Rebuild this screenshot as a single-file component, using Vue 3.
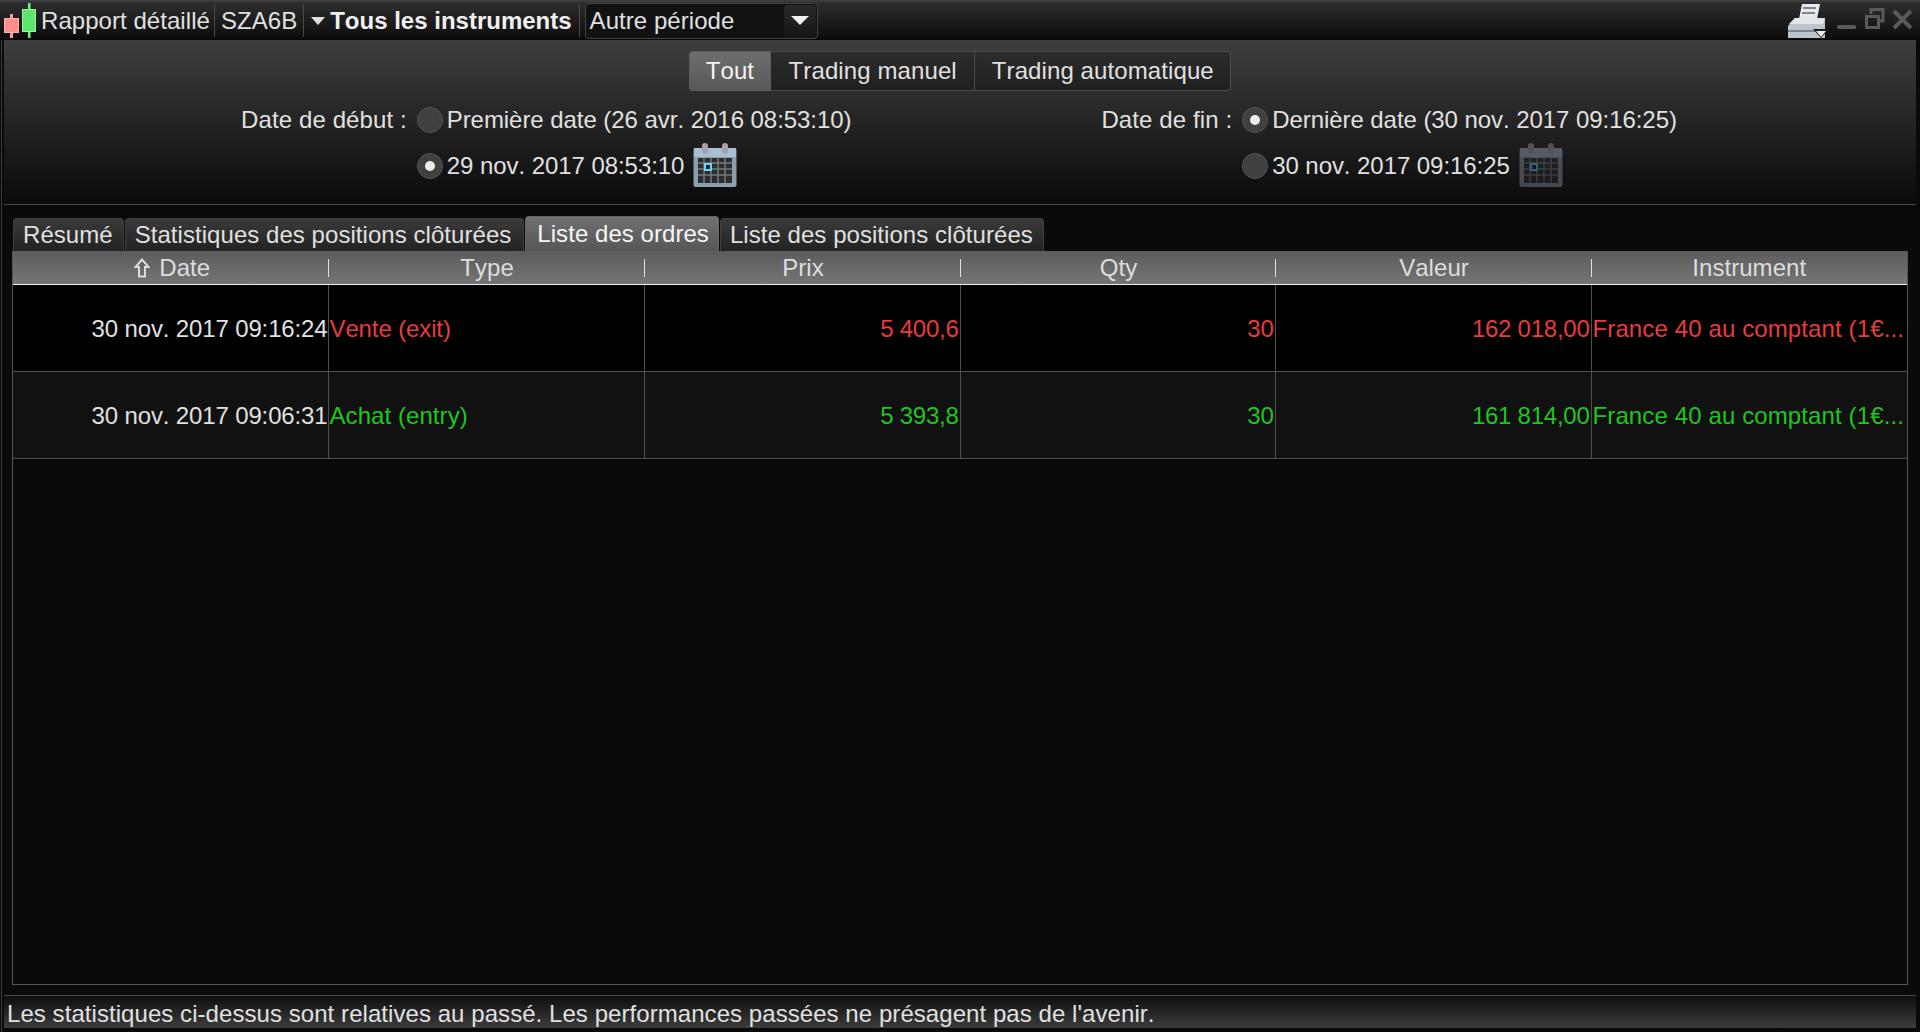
<script setup>
const columns = [
  { label: 'Date', sort: true },
  { label: 'Type' },
  { label: 'Prix' },
  { label: 'Qty' },
  { label: 'Valeur' },
  { label: 'Instrument' }
]
const rows = [
  { date: '30 nov. 2017 09:16:24', type: 'Vente (exit)', price: '5 400,6', qty: '30', value: '162 018,00', instrument: 'France 40 au comptant (1€...', tone: 'sell' },
  { date: '30 nov. 2017 09:06:31', type: 'Achat (entry)', price: '5 393,8', qty: '30', value: '161 814,00', instrument: 'France 40 au comptant (1€...', tone: 'buy' }
]
const tabs = ['Résumé', 'Statistiques des positions clôturées', 'Liste des ordres', 'Liste des positions clôturées']
const modes = ['Tout', 'Trading manuel', 'Trading automatique']
const groups = [
  { label: 'Date de début :', first: 'Première date (26 avr. 2016 08:53:10)', second: '29 nov. 2017 08:53:10', selected: 2 },
  { label: 'Date de fin :', first: 'Dernière date (30 nov. 2017 09:16:25)', second: '30 nov. 2017 09:16:25', selected: 1 }
]
</script>

<template>
  <div class="window">
    <header class="topbar">
      <svg class="candles" width="34" height="37" viewBox="0 0 34 37">
        <rect x="7" y="12" width="3" height="24" fill="#ff9a9a" />
        <rect x="1.5" y="16.5" width="14" height="14" fill="#ff8f8f" stroke="#ffb0b0" />
        <rect x="25" y="1" width="2.5" height="35" fill="#6ff07a" />
        <rect x="19.5" y="7.5" width="13" height="22" fill="#5ee46c" stroke="#96f7a0" />
      </svg>
      <span class="title first">Rapport détaillé</span>
      <span class="title">SZA6B</span>
      <span class="title strong"><i class="tri"></i><b>Tous les instruments</b></span>
      <div class="select">
        <span>Autre période</span>
        <span class="select-btn"><i class="tri big"></i></span>
      </div>
      <div class="win-tools">
        <svg width="42" height="37" viewBox="0 0 42 37">
          <path d="M15 2h18l-3 15H12z" fill="#e6eaee" />
          <path d="M16 6h13M15 11h13" stroke="#7d868e" stroke-width="2" />
          <path d="M1 24l7-8h30v20H1z" fill="#bcc5cb" />
          <path d="M8 16h30l-2 6H2z" fill="#e3e7ea" />
          <path d="M1 29h37" stroke="#7a858d" stroke-width="2" />
          <path d="M26 27h16l-8 9z" fill="#1c1c1c" />
          <path d="M29 29h10l-5 6z" fill="#ececec" />
        </svg>
        <svg width="78" height="37" viewBox="0 0 78 37">
          <rect x="3" y="23" width="19" height="4" rx="1.5" fill="#5a5a5a" />
          <path d="M37 12V7.500H49V19H45" fill="none" stroke="#5a5a5a" stroke-width="3" />
          <rect x="32.500" y="14.500" width="12" height="11" fill="none" stroke="#5a5a5a" stroke-width="3" />
          <path d="M60 9l17 17M77 9L60 26" stroke="#5a5a5a" stroke-width="4" />
        </svg>
      </div>
    </header>

    <section class="panel">
      <div class="modes">
        <button v-for="(mode, i) in modes" :key="mode" class="mode" :class="{ active: i === 0 }">{{ mode }}</button>
      </div>
      <div class="dates">
        <div v-for="group in groups" :key="group.label" class="date-group">
          <span class="date-label">{{ group.label }}</span>
          <div class="option">
            <i class="radio" :class="{ on: group.selected === 1 }"></i>
            <span>{{ group.first }}</span>
          </div>
          <div class="option second">
            <i class="radio" :class="{ on: group.selected === 2 }"></i>
            <span>{{ group.second }}</span>
            <svg class="calendar" :class="{ dim: group.selected !== 2 }" width="44" height="44" viewBox="0 0 44 44">
              <rect x="0.5" y="5" width="43" height="39" rx="2" fill="#8c9dad" />
              <rect x="1" y="5" width="42" height="9" fill="#a9bfd2" />
              <rect x="9" y="0" width="6" height="11" rx="3" fill="#a79fae" />
              <rect x="29" y="0" width="6" height="11" rx="3" fill="#a79fae" />
              <rect x="5" y="15" width="34" height="25" fill="#2d2d2d" />
              <path d="M5 20h34M5 26h34M5 32h34M11 15v25M18 15v25M25 15v25M32 15v25" stroke="#737a80" stroke-width="1.5" />
              <rect x="12" y="21" width="6" height="6" fill="#123" stroke="#6fd4f5" stroke-width="2" />
            </svg>
          </div>
        </div>
      </div>
    </section>

    <section class="content">
      <nav class="tabs">
        <span v-for="(tab, i) in tabs" :key="tab" class="tab" :class="{ active: i === 2 }">{{ tab }}</span>
      </nav>
      <div class="table">
        <div class="thead">
          <div v-for="col in columns" :key="col.label" class="th">
            <svg v-if="col.sort" class="sort" width="16" height="20" viewBox="0 0 16 20">
              <path d="M8 1.500L14.500 9H11V18.500H5V9H1.500Z" fill="none" stroke="#dcdcdc" stroke-width="2" />
            </svg>
            {{ col.label }}
          </div>
        </div>
        <div v-for="row in rows" :key="row.date" class="tr">
          <div class="td right neutral num-date">{{ row.date }}</div>
          <div class="td text" :class="row.tone">{{ row.type }}</div>
          <div class="td right num" :class="row.tone">{{ row.price }}</div>
          <div class="td right num" :class="row.tone">{{ row.qty }}</div>
          <div class="td right num" :class="row.tone">{{ row.value }}</div>
          <div class="td wide" :class="row.tone">{{ row.instrument }}</div>
        </div>
      </div>
    </section>

    <footer class="status">Les statistiques ci-dessus sont relatives au passé. Les performances passées ne présagent pas de l'avenir.</footer>
  </div>
</template>

<style>
html, body { margin: 0; background: #0a0a0a; }
</style>

<style scoped>
.window {
  height: 1032px;
  box-sizing: border-box;
  display: flex;
  flex-direction: column;
  background: linear-gradient(90deg, #0a0a0a 1px, #3c3c3c 1px, #3c3c3c 2px, #0a0a0a 2px);
  color: #e0e0e0;
  font: 24px/28px "Liberation Sans", Arial, sans-serif;
  font-kerning: none;
  letter-spacing: 0.05px;
  overflow: hidden;
}
.topbar {
  height: 40px;
  flex: none;
  display: flex;
  align-items: center;
  box-sizing: border-box;
  padding-left: 3px;
  background: linear-gradient(#2e2e2e, #0c0c0c);
  border-top: 2px solid #3d3d3d;
  border-bottom: 1px solid #050505;
}
.candles { flex: none; margin-right: 3px; }
.title {
  display: flex;
  align-items: center;
  height: 33px;
  padding: 0 6px;
  border-right: 1px solid #4a4a4a;
  white-space: nowrap;
}
.title.first { padding: 0 4px 0 1px; }
.title.strong { padding: 0 7px 0 7px; font-weight: 700; color: #f0f0f0; }
.title b { font-weight: 700; letter-spacing: 0; }
.tri {
  display: inline-block;
  width: 0;
  height: 0;
  margin-right: 5px;
  border: 7.5px solid transparent;
  border-top: 8px solid #e0e0e0;
  border-bottom: 0;
}
.tri.big { margin: 0; border-width: 9px 9px 0; border-top-color: #eee; }
.select {
  box-sizing: border-box;
  width: 233px;
  height: 36px;
  margin-left: 5px;
  padding: 0 1px 0 4px;
  display: flex;
  align-items: center;
  justify-content: space-between;
  background: #111;
  border: 1px solid #444;
  border-radius: 4px;
}
.select-btn {
  width: 32px;
  height: 31px;
  display: flex;
  align-items: center;
  justify-content: center;
  border-radius: 3px;
  background: linear-gradient(#2a2a2a, #161616);
}
.win-tools { margin-left: auto; margin-right: 8px; display: flex; align-items: center; gap: 5px; }
.panel {
  height: 165px;
  flex: none;
  box-sizing: border-box;
  margin: 0 4px;
  background: linear-gradient(#3e3e3e, #0a0a0a);
  border-bottom: 1px solid #4a4a4a;
}
.modes { display: flex; justify-content: center; padding-top: 11px; }
.mode {
  height: 40px;
  padding: 0 16px;
  font: inherit;
  font-kerning: none;
  letter-spacing: 0.1px;
  color: #e0e0e0;
  background: linear-gradient(#2c2c2c, #202020);
  border: 1px solid #4c4c4c;
  border-left-width: 0;
}
.mode:first-child { border-left-width: 1px; border-radius: 3px 0 0 3px; }
.mode:nth-child(2) { padding: 0 17.500px; }
.mode:last-child { padding: 0 16.500px; border-radius: 0 3px 3px 0; }
.mode.active { color: #f4f4f4; background: linear-gradient(#6e6e6e, #585858); border-color: #5e5e5e; }
.dates { display: flex; justify-content: center; gap: 250px; padding: 6px 2px 0 0; letter-spacing: -0.06px; }
.date-group {
  display: grid;
  grid-template-columns: auto auto;
  grid-auto-rows: 46px;
  column-gap: 10px;
  align-items: center;
}
.date-label { grid-column: 1; grid-row: 1; letter-spacing: 0.1px; }
.option { display: flex; align-items: center; gap: 4px; white-space: nowrap; grid-column: 2; }
.radio {
  width: 24px;
  height: 24px;
  flex: none;
  position: relative;
  border-radius: 50%;
  background: #404040;
  border: 1px solid #555;
}
.radio.on::after {
  content: "";
  position: absolute;
  left: 7px;
  top: 7px;
  width: 10px;
  height: 10px;
  border-radius: 50%;
  background: #eee;
}
.calendar { margin: -2px 0 0 5px; flex: none; }
.calendar.dim { opacity: 0.4; }
.content {
  flex: 1;
  min-height: 0;
  display: flex;
  flex-direction: column;
  padding: 10px 12px 10px 12px;
}
.tabs { height: 36px; flex: none; display: flex; align-items: flex-end; gap: 1px; margin-left: 1px; }
.tab {
  height: 33px;
  box-sizing: border-box;
  padding: 0 10px;
  display: flex;
  align-items: center;
  white-space: nowrap;
  background: linear-gradient(#3a3a3a, #222);
  border: 1px solid #3f3f3f;
  border-bottom: 0;
  border-radius: 4px 4px 0 0;
}
.tab:first-child { padding-left: 9px; }
.tab:nth-child(2) { padding: 0 12px 0 9px; }
.tab:last-child { padding-left: 9px; }
.tab.active { height: 35px; padding: 0 9px 0 11px; color: #f6f6f6; background: linear-gradient(#707070, #565656); border-color: #666; }
.table {
  flex: 1;
  min-height: 0;
  box-sizing: border-box;
  border: 1px solid #555;
  border-top: 0;
  background: #0a0a0a;
}
.thead, .tr { display: grid; grid-template-columns: 315.5px 316px 316px 315px 316px 1fr; }
.thead {
  height: 34px;
  box-sizing: border-box;
  align-items: center;
  background: linear-gradient(#5c5c5c, #757575);
  border-bottom: 1px solid #eee;
}
.th {
  height: 18px;
  padding-left: 2px;
  display: flex;
  align-items: center;
  justify-content: center;
  gap: 9px;
  color: #ddd;
  border-right: 1px solid #e0e0e0;
}
.th:first-child { padding-left: 4px; }
.th:last-child { padding-left: 0; border-right: 0; }
.sort { flex: none; }
.tr { height: 87px; box-sizing: border-box; background: #000; border-bottom: 1px solid #4f4f4f; }
.tr:nth-child(odd) { background: #111; }
.td {
  display: flex;
  align-items: center;
  padding: 2px 1px 0;
  white-space: nowrap;
  overflow: hidden;
  border-right: 1px solid #4f4f4f;
}
.td:last-child { border-right: 0; }
.right { justify-content: flex-end; }
.num-date { padding-right: 0; letter-spacing: -0.14px; }
.num { letter-spacing: -0.25px; }
.text { letter-spacing: -0.12px; }
.text.buy { letter-spacing: 0.07px; }
.wide { letter-spacing: 0.12px; }
.neutral { color: #e0e0e0; }
.sell { color: #e83c3c; }
.buy { color: #22c422; }
.status {
  height: 33px;
  flex: none;
  box-sizing: border-box;
  margin: 0 4px 4px;
  padding: 1px 3px 0;
  line-height: 34px;
  letter-spacing: 0.06px;
  white-space: nowrap;
  background: linear-gradient(#0e0e0e, #3c3c3c);
  border-top: 1px solid #4a4a4a;
}
</style>
